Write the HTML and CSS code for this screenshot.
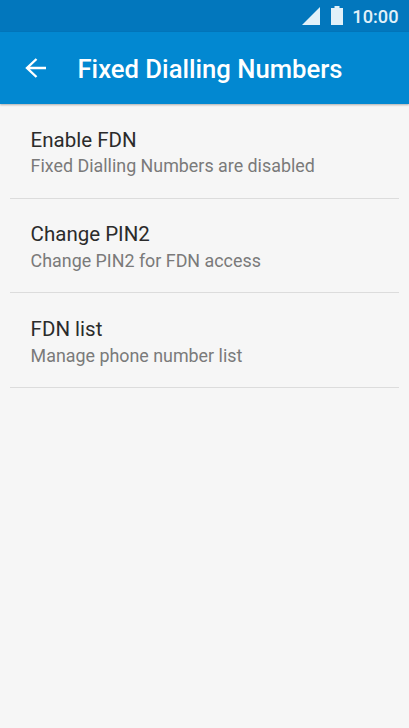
FILE: index.html
```
<!DOCTYPE html>
<html lang="en">
<head>
  <meta charset="utf-8">
  <title>Fixed Dialling Numbers</title>
  <link rel="stylesheet" href="styles.css">
</head>

<body>
  <div class="status">
    <svg class="signal" width="18" height="18" viewBox="0 0 18 18"><path d="M18 0v18H0z"/></svg>
    <svg class="battery" width="12" height="19" viewBox="0 0 12 19"><path d="M3.5 0h5v2H12v17H0V2h3.5z"/></svg>
    <span class="clock">10:00</span>
  </div>
  <header class="toolbar">
    <svg class="back" width="22" height="20" viewBox="0 0 22 20"><path d="M21 10H2M11.5 1L2 10l9.5 9"/></svg>
    <h1>Fixed Dialling Numbers</h1>
  </header>
  <ul class="list">
    <li>
      <div class="title">Enable FDN</div>
      <div class="summary">Fixed Dialling Numbers are disabled</div>
    </li>
    <li>
      <div class="title">Change PIN2</div>
      <div class="summary">Change PIN2 for FDN access</div>
    </li>
    <li>
      <div class="title">FDN list</div>
      <div class="summary">Manage phone number list</div>
    </li>
  </ul>
</body>

</html>
```

FILE: styles.css
```
* {
  box-sizing: border-box;
}

body {
  margin: 0;
  height: 728px;
  overflow: hidden;
  background: #f6f6f6;
  font-family: Roboto, sans-serif;
}

.status {
  display: flex;
  align-items: center;
  justify-content: flex-end;
  height: 32px;
  padding-right: 10.5px;
  background: #0277bd;
  color: #e1f1f9;
}

.status svg {
  fill: #e1f1f9;
}

.battery {
  margin: 0 9.5px 1px 10.5px;
}

.clock {
  font-size: 18.2px;
  font-weight: 500;
  line-height: 32px;
  padding-top: 1px;
}

.toolbar {
  display: flex;
  align-items: center;
  height: 72px;
  padding-left: 25px;
  background: #0288d1;
  box-shadow: 0 1px 2px rgba(0, 0, 0, 0.3);
}

.back {
  fill: none;
  stroke: #fff;
  stroke-width: 2.4;
}

h1 {
  margin: 2px 0 0 30.5px;
  color: #fff;
  font-size: 25.65px;
  font-weight: 500;
  white-space: nowrap;
}

.list {
  margin: 0;
  padding: 0 10px;
  list-style: none;
}

.list li {
  height: 94.6px;
  padding: 23.5px 20px 0 20.6px;
  border-bottom: 1px solid #dcdcdc;
}

.title {
  color: #2b2b2b;
  font-size: 20.5px;
  line-height: 24px;
}

.summary {
  margin-top: 3.9px;
  color: #7a7a7a;
  font-size: 17.88px;
  line-height: 22px;
}
```
